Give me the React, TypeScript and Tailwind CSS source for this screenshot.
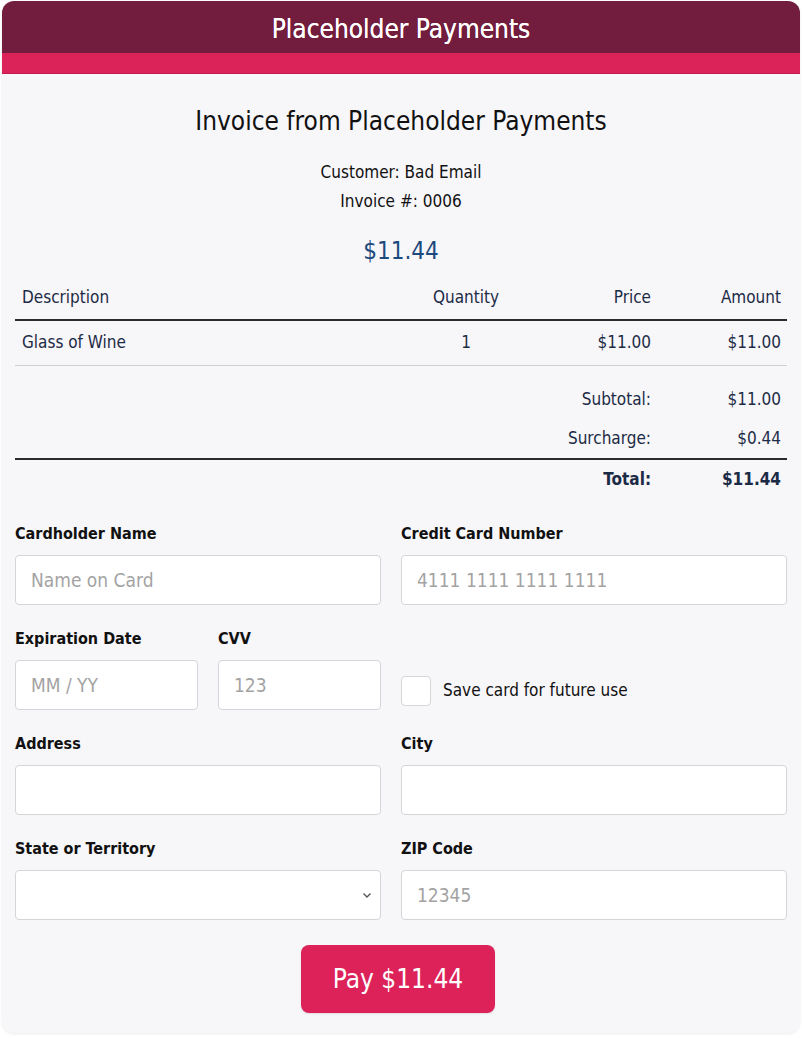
import React, { useState } from 'react';

const font = { fontFamily: '"DejaVu Sans Condensed", "DejaVu Sans", sans-serif' };

const Field: React.FC<{ label: string; placeholder?: string; className?: string }> = ({ label, placeholder, className }) => (
  <div className={className}>
    <label className="block h-[20px] leading-[20px] text-[16px] font-bold text-[#111] mb-[11px]">{label}</label>
    <input
      placeholder={placeholder}
      className="block w-full h-[50px] bg-white border border-[#d6d4d8] rounded-[4px] px-[15px] text-[19px] text-[#333] placeholder:text-[#a3a3a3] outline-none"
    />
  </div>
);

const App: React.FC = () => {
  const [saveCard, setSaveCard] = useState(false);

  return (
    <div className="min-h-screen bg-white pt-[1px] px-[2px]" style={font}>
      <div className="rounded-[12px] bg-[#f7f6f9] shadow-[0_1px_3px_rgba(0,0,0,0.08)] overflow-hidden">
        <div className="h-[52px] pt-[5px] bg-[#721d3d] flex items-center justify-center text-white text-[26px] [text-shadow:0_0_0.6px_#fff]">
          Placeholder Payments
        </div>
        <div className="h-[21px] bg-[#dc2359] border-b border-[#c41b4e]"></div>

        <div className="px-[13px] pb-[20px]">
          <h1 className="mt-[31px] h-[32px] leading-[32px] text-center text-[26px] text-[#111]">
            Invoice from Placeholder Payments
          </h1>
          <div className="mt-[21px] text-center text-[17px] leading-[29px] text-[#111]">
            <p>Customer: Bad Email</p>
            <p>Invoice #: 0006</p>
          </div>
          <p className="mt-[19px] h-[32px] leading-[32px] text-center text-[24px] text-[#1d4a7e]">$11.44</p>

          <div className="mt-[9px] text-[17px] text-[#1c2b45]">
            <div className="grid grid-cols-[1fr_82px_150px_130px] h-[45px] items-center border-b-2 border-[#2b2b2b]">
              <span className="pl-[7px]">Description</span>
              <span className="text-center">Quantity</span>
              <span className="text-right pr-[6px]">Price</span>
              <span className="text-right pr-[6px]">Amount</span>
            </div>
            <div className="grid grid-cols-[1fr_82px_150px_130px] h-[45px] items-center border-b border-[#cfcfcf]">
              <span className="pl-[7px]">Glass of Wine</span>
              <span className="text-center">1</span>
              <span className="text-right pr-[6px]">$11.00</span>
              <span className="text-right pr-[6px]">$11.00</span>
            </div>
            <div className="pt-[14px] border-b-2 border-[#2b2b2b]">
              <div className="grid grid-cols-[1fr_130px] h-[39px] items-center">
                <span className="text-right pr-[6px]">Subtotal:</span>
                <span className="text-right pr-[6px]">$11.00</span>
              </div>
              <div className="grid grid-cols-[1fr_130px] h-[39px] items-center">
                <span className="text-right pr-[6px]">Surcharge:</span>
                <span className="text-right pr-[6px]">$0.44</span>
              </div>
            </div>
            <div className="grid grid-cols-[1fr_130px] h-[39px] items-center font-bold">
              <span className="text-right pr-[6px]">Total:</span>
              <span className="text-right pr-[6px]">$11.44</span>
            </div>
          </div>

          <div className="mt-[25px] grid grid-cols-[366px_1fr] gap-x-[20px] gap-y-[24px]">
            <Field label="Cardholder Name" placeholder="Name on Card" />
            <Field label="Credit Card Number" placeholder="4111 1111 1111 1111" />

            <div className="grid grid-cols-[183px_1fr] gap-x-[20px]">
              <Field label="Expiration Date" placeholder="MM / YY" />
              <Field label="CVV" placeholder="123" />
            </div>
            <div className="flex items-end pb-[4px]">
              <label className="flex items-center gap-[12px] cursor-pointer">
                <input
                  type="checkbox"
                  checked={saveCard}
                  onChange={(e) => setSaveCard(e.target.checked)}
                  className="appearance-none w-[30px] h-[30px] bg-white border border-[#d6d4d8] rounded-[4px] checked:bg-[#dc2359]"
                />
                <span className="text-[17px] text-[#111]">Save card for future use</span>
              </label>
            </div>

            <Field label="Address" />
            <Field label="City" />

            <div>
              <label className="block h-[20px] leading-[20px] text-[16px] font-bold text-[#111] mb-[11px]">State or Territory</label>
              <div className="relative">
                <select className="block w-full h-[50px] bg-white border border-[#d6d4d8] rounded-[4px] px-[15px] text-[19px] appearance-none outline-none">
                  <option value=""></option>
                </select>
                <svg className="absolute right-[9px] top-[20px] w-[10px] h-[10px] pointer-events-none" viewBox="0 0 10 10" fill="none" stroke="#555" strokeWidth="1.4">
                  <path d="M1.5 3.5 L5 7 L8.5 3.5" />
                </svg>
              </div>
            </div>
            <Field label="ZIP Code" placeholder="12345" />
          </div>

          <div className="mt-[25px] flex justify-center">
            <button className="w-[194px] h-[68px] mr-[6px] bg-[#dc2259] text-white text-[26px] rounded-[8px] shadow-[0_1px_2px_rgba(0,0,0,0.1)]">
              Pay $11.44
            </button>
          </div>
        </div>
      </div>
    </div>
  );
};

export default App;
